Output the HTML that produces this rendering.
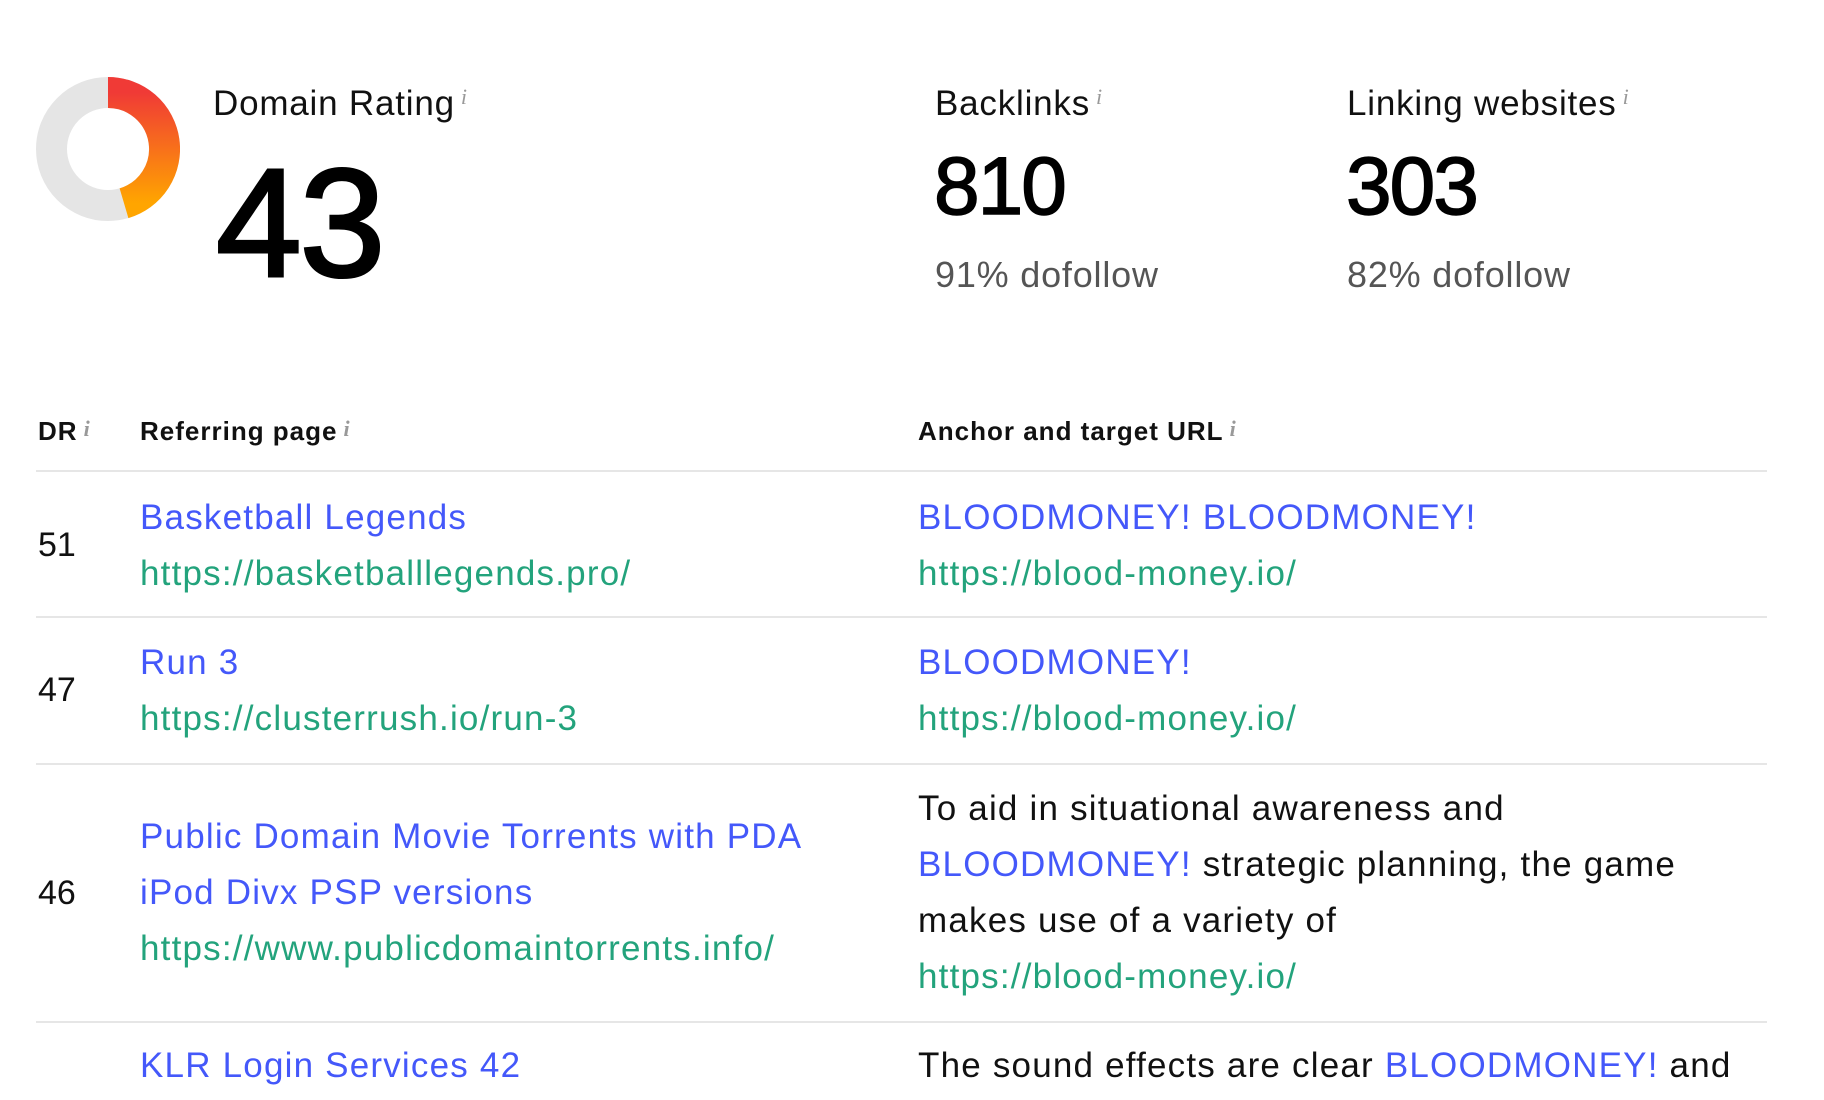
<!DOCTYPE html>
<html><head><meta charset="utf-8"><style>
body{margin:0;width:1824px;height:1100px;background:#fff;font-family:"Liberation Sans",sans-serif;color:#111;position:relative;overflow:hidden}
.a{position:absolute;white-space:nowrap}
.i{font-family:"Liberation Serif",serif;font-style:italic;color:#999;font-size:22px;vertical-align:top;margin-left:6px;letter-spacing:0}
.b{color:#4458fa}.g{color:#23a37c}
.t{font-size:35px;line-height:56px;letter-spacing:1.2px}
.h{font-weight:bold;font-size:26px;letter-spacing:1px}
.ln{position:absolute;left:36px;width:1731px;height:2px;background:#e6e6e6}
.n{font-size:34px}
</style></head><body>
<svg class="a" style="left:36px;top:77px" width="144" height="144" viewBox="0 0 144 144">
<defs><linearGradient id="gr" x1="0" y1="0" x2="0" y2="1"><stop offset="0" stop-color="#f03a36"/><stop offset="1" stop-color="#ffa500"/></linearGradient></defs>
<circle cx="72" cy="72" r="56.5" fill="none" stroke="#e5e5e5" stroke-width="31"/>
<path d="M72 15.5 A56.5 56.5 0 0 1 88 126.2" fill="none" stroke="url(#gr)" stroke-width="31"/>
</svg>
<div class="a" style="left:213px;top:84px;font-size:35px;letter-spacing:0.8px">Domain Rating<span class="i">i</span></div>
<div class="a" style="left:216px;top:138px;font-size:154px;line-height:170px;letter-spacing:-2px;color:#000;-webkit-text-stroke:3px #000">43</div>
<div class="a" style="left:935px;top:84px;font-size:35px;letter-spacing:0.8px">Backlinks<span class="i">i</span></div>
<div class="a" style="left:934px;top:142px;font-size:82px;line-height:90px;letter-spacing:-2px;color:#000;-webkit-text-stroke:1.5px #000">810</div>
<div class="a" style="left:935px;top:254px;font-size:36px;color:#555;letter-spacing:0.8px">91% dofollow</div>
<div class="a" style="left:1347px;top:84px;font-size:35px;letter-spacing:0.8px">Linking websites<span class="i">i</span></div>
<div class="a" style="left:1346px;top:142px;font-size:82px;line-height:90px;letter-spacing:-2px;color:#000;-webkit-text-stroke:1.5px #000">303</div>
<div class="a" style="left:1347px;top:254px;font-size:36px;color:#555;letter-spacing:0.8px">82% dofollow</div>

<div class="a h" style="left:38px;top:416px">DR<span class="i">i</span></div>
<div class="a h" style="left:140px;top:416px">Referring page<span class="i">i</span></div>
<div class="a h" style="left:918px;top:416px">Anchor and target URL<span class="i">i</span></div>
<div class="ln" style="top:470px"></div>

<div class="a n" style="left:38px;top:526px">51</div>
<div class="a t" style="left:140px;top:490px"><span class="b">Basketball Legends</span><br><span class="g">https://basketballlegends.pro/</span></div>
<div class="a t" style="left:918px;top:490px"><span class="b">BLOODMONEY! BLOODMONEY!</span><br><span class="g">https://blood-money.io/</span></div>
<div class="ln" style="top:616px"></div>

<div class="a n" style="left:38px;top:671px">47</div>
<div class="a t" style="left:140px;top:635px"><span class="b">Run 3</span><br><span class="g">https://clusterrush.io/run-3</span></div>
<div class="a t" style="left:918px;top:635px"><span class="b">BLOODMONEY!</span><br><span class="g">https://blood-money.io/</span></div>
<div class="ln" style="top:763px"></div>

<div class="a n" style="left:38px;top:874px">46</div>
<div class="a t" style="left:140px;top:809px"><span class="b">Public Domain Movie Torrents with PDA</span><br><span class="b">iPod Divx PSP versions</span><br><span class="g">https://www.publicdomaintorrents.info/</span></div>
<div class="a t" style="left:918px;top:781px">To aid in situational awareness and<br><span class="b">BLOODMONEY!</span> strategic planning, the game<br>makes use of a variety of<br><span class="g">https://blood-money.io/</span></div>
<div class="ln" style="top:1021px"></div>

<div class="a t" style="left:140px;top:1038px"><span class="b">KLR Login Services 42</span></div>
<div class="a t" style="left:918px;top:1038px">The sound effects are clear <span class="b">BLOODMONEY!</span> and</div>
</body></html>
